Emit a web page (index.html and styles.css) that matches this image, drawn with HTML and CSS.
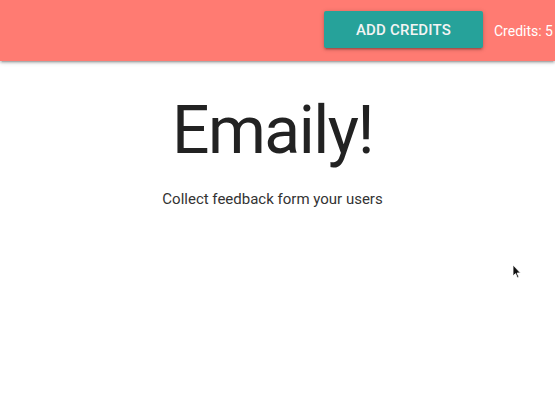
FILE: index.html
```html
<!DOCTYPE html>
<html>
<head>
<meta charset="utf-8">
<link rel="stylesheet" href="styles.css">
</head>
<body>
<nav class="nav">
  <div class="nav-right">
    <a class="btn">ADD CREDITS</a>
    <span class="credits">Credits: 5</span>
  </div>
</nav>
<main class="landing">
  <h1 class="title">Emaily!</h1>
  <p class="subtitle">Collect feedback form your users</p>
</main>
<svg class="cursor" width="10" height="16" viewBox="0 0 10 16"><path d="M1 1 L1 12 L3.5 9.6 L5.5 14 L7 13.3 L5.1 9 L8.5 9 Z" fill="#111" stroke="#fff" stroke-width="0.8"/></svg>
</body>
</html>
```
FILE: styles.css
```css
html, body { margin: 0; padding: 0; background: #fff; overflow: hidden; }
body { font-family: Roboto, "Noto Sans", sans-serif; width: 555px; height: 416px; position: relative; }
.nav {
  height: 61px;
  background: #ff7b72;
  box-shadow: 0 2px 2px 0 rgba(0,0,0,0.14), 0 3px 1px -2px rgba(0,0,0,0.12), 0 1px 5px 0 rgba(0,0,0,0.2);
  display: flex;
  justify-content: flex-end;
  align-items: center;
}
.nav-right { display: flex; align-items: center; margin-right: 2px; white-space: nowrap; }
.btn {
  display: flex; align-items: center; justify-content: center;
  width: 159px; height: 37px; box-sizing: border-box;
  background: #26a29a; color: #f4f4f4;
  font-size: 15px; font-weight: 500; letter-spacing: 0.2px;
  border-radius: 2px;
  box-shadow: 0 2px 2px 0 rgba(0,0,0,0.14), 0 3px 1px -2px rgba(0,0,0,0.12), 0 1px 5px 0 rgba(0,0,0,0.2);
  margin-top: -2px;
}
.credits { color: #fff; font-size: 14px; margin-left: 11px; }
.landing { display: flex; flex-direction: column; align-items: center; padding-right: 10px; }
.title { margin: 32px 0 0; font-weight: 400; font-size: 66px; line-height: 76px; color: #222; letter-spacing: -1.5px; }
.subtitle { margin: 21px 0 0; font-size: 15px; color: #333; }
.cursor { position: absolute; left: 512px; top: 264px; }
```
